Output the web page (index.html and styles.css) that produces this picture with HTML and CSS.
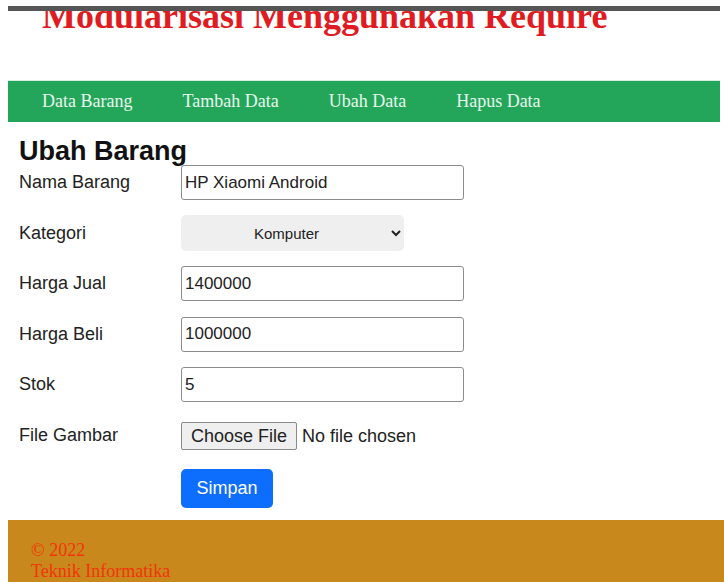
FILE: index.html
```html
<!DOCTYPE html>
<html lang="en">

<head>
    <title>Ubah Barang</title>
    <meta charset="UTF-8">
    <link rel="stylesheet" href="styles.css">
</head>

<body>
    <div class="topbar"></div>
    <header class="header">
        <h1>Modularisasi Menggunakan Require</h1>
    </header>

    <nav class="navbar">
        <ul class="nav-list">
            <li><a href="#">Data Barang</a></li>
            <li><a href="#">Tambah Data</a></li>
            <li><a href="#">Ubah Data</a></li>
            <li><a href="#">Hapus Data</a></li>
        </ul>
    </nav>

    <main class="content">
        <h2>Ubah Barang</h2>
        <form class="form-grid">
            <label for="nama">Nama Barang</label>
            <div class="field"><input type="text" id="nama" class="text-input" value="HP Xiaomi Android"></div>

            <label for="kategori">Kategori</label>
            <div class="field">
                <select id="kategori" class="select-input">
                    <option>Komputer</option>
                    <option>Handphone</option>
                    <option>Aksesoris</option>
                </select>
            </div>

            <label for="jual">Harga Jual</label>
            <div class="field"><input type="text" id="jual" class="text-input" value="1400000"></div>

            <label for="beli">Harga Beli</label>
            <div class="field"><input type="text" id="beli" class="text-input" value="1000000"></div>

            <label for="stok">Stok</label>
            <div class="field"><input type="text" id="stok" class="text-input" value="5"></div>

            <label for="gambar">File Gambar</label>
            <div class="field"><input type="file" id="gambar" class="file-input"></div>

            <span></span>
            <div class="field-btn"><button type="button" class="save-button">Simpan</button></div>
        </form>
    </main>

    <footer class="footer">
        <p>&copy; 2022<br>Teknik Informatika</p>
    </footer>
</body>

</html>
```

FILE: styles.css
```css
body {
    margin: 0;
    padding-left: 8px;
    background: #fff;
    font-family: "Liberation Sans", Arial, sans-serif;
    color: #222;
}

.topbar {
    height: 5px;
    margin: 6px 4px 0 0;
    background-color: #555555;
}

.header {
    height: 69px;
    overflow: hidden;
}

.header h1 {
    margin: -13px 0 0 34px;
    font-family: "Liberation Serif", "Times New Roman", serif;
    font-size: 36px;
    line-height: 36px;
    font-weight: bold;
    color: #e01b22;
    white-space: nowrap;
}

.navbar {
    margin-right: 4px;
    height: 42px;
    background-color: #23a65a;
    border-top: 1px solid #d6efe0;
    box-sizing: border-box;
}

.nav-list {
    list-style-type: none;
    margin: 0;
    padding: 0 0 0 9px;
    height: 100%;
    display: flex;
    align-items: center;
}

.nav-list li a {
    display: block;
    padding: 0 25px;
    color: #eaf7ee;
    font-family: "Liberation Serif", "Times New Roman", serif;
    font-size: 18px;
    text-decoration: none;
}

.content {
    padding-left: 11px;
}

.content h2 {
    margin: 15px 0 0;
    font-size: 27px;
    line-height: 28px;
    font-weight: bold;
    color: #111;
}

.form-grid {
    display: grid;
    grid-template-columns: 162px 1fr;
    grid-auto-rows: 35px;
    row-gap: 15.5px;
    align-items: center;
}

.form-grid label {
    font-size: 18px;
    color: #222;
}

.field {
    display: flex;
    align-items: center;
}

.text-input {
    width: 283px;
    height: 35px;
    box-sizing: border-box;
    border: 1px solid #8c8c8c;
    border-radius: 3px;
    padding: 0 3px;
    font-family: "Liberation Sans", Arial, sans-serif;
    font-size: 17px;
    color: #222;
}

.select-input {
    width: 223px;
    height: 36px;
    border: none;
    border-radius: 5px;
    background-color: #efefef;
    font-family: "Liberation Sans", Arial, sans-serif;
    font-size: 15px;
    color: #222;
    text-align: center;
    text-align-last: center;
    padding: 0 8px;
}

.file-input {
    margin-top: 2px;
    font-family: "Liberation Sans", Arial, sans-serif;
    font-size: 18px;
    color: #222;
}

.file-input::file-selector-button {
    height: 28px;
    margin-right: 5px;
    padding: 0 9px;
    font-family: "Liberation Sans", Arial, sans-serif;
    font-size: 18px;
    color: #222;
    background-color: #efefef;
    border: 1px solid #8a8a8a;
    border-radius: 2px;
}

.field-btn {
    align-self: start;
}

.save-button {
    width: 92px;
    height: 39px;
    margin-top: 1px;
    background-color: #0d6efd;
    color: #fff;
    border: none;
    border-radius: 5px;
    font-family: "Liberation Sans", Arial, sans-serif;
    font-size: 18px;
    cursor: pointer;
}

.footer {
    margin-top: 17px;
    height: 70px;
    background-color: #c8881b;
    padding: 20px 0 0 23px;
    box-sizing: border-box;
}

.footer p {
    margin: 0;
    font-family: "Liberation Serif", "Times New Roman", serif;
    font-size: 18px;
    line-height: 21px;
    color: #f2340c;
}
```
